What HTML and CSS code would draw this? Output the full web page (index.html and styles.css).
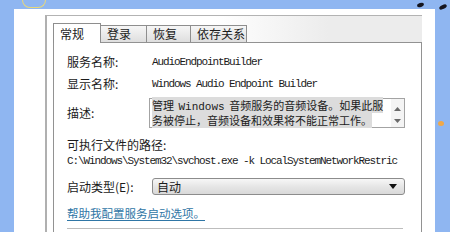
FILE: index.html
```html
<!DOCTYPE html>
<html lang="zh-CN">
<head>
<meta charset="utf-8">
<title>服务属性</title>
<link rel="stylesheet" href="styles.css">
</head>
<body>
<span class="deco deco-curve"></span>
<span class="deco deco-dot1"></span>
<span class="deco deco-dot2"></span>
<span class="deco deco-orange"></span>
<div class="dialog">
  <div class="frame">
    <div class="tabs">
      <div class="tab active">常规</div>
      <div class="tab">登录</div>
      <div class="tab">恢复</div>
      <div class="tab">依存关系</div>
    </div>
    <div class="panel">
      <div class="row r1">
        <div class="label">服务名称:</div>
        <div class="mono">AudioEndpointBuilder</div>
      </div>
      <div class="row r2">
        <div class="label">显示名称:</div>
        <div class="mono">Windows Audio Endpoint Builder</div>
      </div>
      <div class="row r3">
        <div class="label short">描述:</div>
        <div class="textarea">
          <div class="ta-text"><span class="sel">管理 <span class="mono wide">Windows</span> 音频服务的音频设备。如果此服</span><br><span class="sel">务被停止，音频设备和效果将不能正常工作。</span></div>
          <div class="ta-scroll">
            <svg width="7" height="4" viewBox="0 0 7 4"><path d="M0 4 L3.5 0 L7 4 Z" fill="#6a6a6a"/></svg>
            <svg width="7" height="4" viewBox="0 0 7 4"><path d="M0 0 L3.5 4 L7 0 Z" fill="#6a6a6a"/></svg>
          </div>
        </div>
      </div>
      <div class="line r4">可执行文件的路径:</div>
      <div class="line mono path">C:\Windows\System32\svchost.exe -k LocalSystemNetworkRestric</div>
      <div class="row r6">
        <div class="label">启动类型(E):</div>
        <div class="select">
          <span>自动</span>
          <svg width="8" height="5" viewBox="0 0 8 5"><path d="M0 0 L8 0 L4 5 Z" fill="#111"/></svg>
        </div>
      </div>
      <div class="line link">帮助我配置服务启动选项。</div>
      <div class="sep"></div>
    </div>
  </div>
</div>
</body>
</html>
```

FILE: styles.css
```css
html, body {
  margin: 0;
  padding: 0;
}
body {
  width: 450px;
  height: 232px;
  overflow: hidden;
  background: #8fb6f1;
  font-family: "Noto Sans CJK SC", "Noto Sans", sans-serif;
  font-size: 12px;
  color: #1b1b1b;
  position: relative;
}
.deco {
  position: absolute;
  display: block;
}
.deco-curve {
  left: 22px;
  top: 0;
  width: 22px;
  height: 7px;
  border: 1px solid #e8d87a;
  border-top: none;
  border-radius: 0 0 12px 12px;
}
.deco-dot1 {
  left: 417px;
  top: 3px;
  width: 7px;
  height: 4px;
  border-radius: 50%;
  background: #15151f;
  transform: rotate(-20deg);
}
.deco-dot2 {
  left: 439px;
  top: 5px;
  width: 8px;
  height: 4px;
  border-radius: 50%;
  background: #15151f;
  transform: rotate(-25deg);
}
.deco-orange {
  left: 438px;
  top: 121px;
  width: 6px;
  height: 5px;
  border-radius: 50%;
  background: #f0a848;
}
.dialog {
  margin: 9px 0 0 14px;
  width: 421px;
  height: 223px;
  background: #ffffff;
  padding: 6px 0 0 31px;
  box-sizing: border-box;
}
.frame {
  width: 377px;
  height: 100%;
  box-sizing: border-box;
  border-top: 1px solid #b3b3b3;
  border-left: 2px solid #b0b0b0;
  padding-left: 6px;
  background: linear-gradient(to right, #ffffff 45%, #ececec 75%) top left / 100% 26px no-repeat;
}
.tabs {
  display: flex;
  align-items: flex-end;
  height: 26px;
}
.tab {
  height: 16px;
  line-height: 16px;
  padding: 0 0 0 6px;
  border: 1px solid #8e8e8e;
  border-bottom: none;
  border-left: none;
  background: linear-gradient(#f6f6f6, #dedede);
  box-sizing: content-box;
}
.tab:nth-child(1) { width: 40px; }
.tab:nth-child(2) { width: 39px; }
.tab:nth-child(3) { width: 37px; }
.tab:nth-child(4) { width: 49px; }
.tab.active {
  height: 19px;
  line-height: 19px;
  border-left: 1px solid #8e8e8e;
  background: #ffffff;
  margin-bottom: -1px;
  position: relative;
  z-index: 1;
}
.panel {
  width: 369px;
  height: 200px;
  box-sizing: border-box;
  border: 1px solid #929292;
  border-bottom: none;
  background: #ffffff;
  padding: 12px 0 0 13px;
}
.row {
  display: flex;
  align-items: center;
}
.label {
  width: 85px;
  flex: none;
  line-height: 14px;
  height: 14px;
}
.label.short {
  width: 82px;
}
.mono {
  font-family: "Liberation Mono", "DejaVu Sans Mono", monospace;
  font-size: 11px;
  letter-spacing: -1.1px;
  line-height: 14px;
  white-space: nowrap;
}
.r1 { height: 14px; }
.r2 { height: 14px; margin-top: 8px; }
.r3 { margin-top: 7px; }
.textarea {
  width: 256px;
  height: 30px;
  box-sizing: border-box;
  border: 1px solid #a3a3a3;
  display: flex;
}
.ta-text {
  flex: 1;
  min-width: 0;
  padding: 0 0 0 2px;
  font-size: 11px;
  line-height: 13px;
  white-space: nowrap;
}
.sel {
  background: #dcdcdc;
}
.sel .mono {
  line-height: 13px;
}
.mono.wide {
  letter-spacing: 0;
  padding: 0 2px;
}
.ta-scroll {
  width: 13px;
  flex: none;
  background: #f4f4f4;
  display: flex;
  flex-direction: column;
  align-items: center;
  justify-content: space-between;
  padding: 8px 0 4px;
  box-sizing: border-box;
}
.line {
  line-height: 14px;
  height: 14px;
}
.r4 { margin-top: 10px; }
.path {
  margin-top: 2px;
}
.r6 { margin-top: 10px; }
.select {
  width: 253px;
  height: 17px;
  box-sizing: border-box;
  border: 1px solid #8c8c8c;
  border-radius: 3px;
  background: linear-gradient(#f7f7f7, #e6e6e6 50%, #d9d9d9);
  display: flex;
  align-items: center;
  justify-content: space-between;
  padding: 0 7px 0 4px;
  line-height: 15px;
}
.link {
  margin-top: 11px;
  font-size: 11.5px;
  color: #2f76a6;
  text-decoration: underline;
  text-underline-offset: 2px;
}
.sep {
  margin-top: 8px;
  width: 336px;
  height: 1px;
  background: #bdbdbd;
}
```
